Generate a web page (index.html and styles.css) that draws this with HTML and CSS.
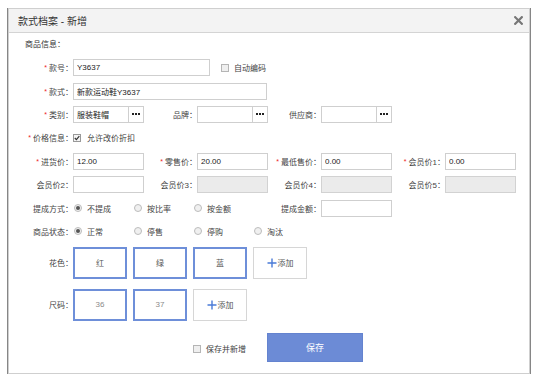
FILE: index.html
```html
<!DOCTYPE html>
<html lang="zh-CN">
<head>
    <meta charset="UTF-8">
    <meta name="viewport" content="width=device-width, initial-scale=1.0">
    <title>款式档案 - 新增</title>
    <link rel="stylesheet" href="styles.css">
</head>
<body>
<div class="dialog">
    <div class="dialog-head">
        <span class="dialog-title">款式档案 - 新增</span>
        <svg class="close" width="9" height="9" viewBox="0 0 9 9">
            <path d="M1.2 1.2 L7.8 7.8 M7.8 1.2 L1.2 7.8" stroke="#777" stroke-width="2.2" stroke-linecap="square"/>
        </svg>
    </div>

    <div class="dialog-body">
        <div class="section-title">商品信息：</div>

        <div class="row">
            <label class="lbl"><i>*</i>款号：</label>
            <input class="inp w-code" type="text" value="Y3637">
            <span class="check gap-l"><span class="box"></span>自动编码</span>
        </div>

        <div class="row">
            <label class="lbl"><i>*</i>款式：</label>
            <input class="inp w-name" type="text" value="新款运动鞋Y3637">
        </div>

        <div class="row">
            <label class="lbl"><i>*</i>类别：</label>
            <div class="lookup"><input type="text" value="服装鞋帽"><span class="dots"><b></b><b></b><b></b></span></div>
            <label class="lbl">品牌：</label>
            <div class="lookup"><input type="text" value=""><span class="dots"><b></b><b></b><b></b></span></div>
            <label class="lbl">供应商：</label>
            <div class="lookup"><input type="text" value=""><span class="dots"><b></b><b></b><b></b></span></div>
        </div>

        <div class="row">
            <label class="lbl"><i>*</i>价格信息：</label>
            <span class="check checked">
                <span class="box"><svg width="6" height="6" viewBox="0 0 6 6"><path d="M0.8 3 L2.4 4.6 L5.3 1.2" fill="none" stroke="#333" stroke-width="1.2"/></svg></span>允许改价折扣
            </span>
        </div>

        <div class="row">
            <label class="lbl"><i>*</i>进货价：</label>
            <input class="inp" type="text" value="12.00">
            <label class="lbl"><i>*</i>零售价：</label>
            <input class="inp" type="text" value="20.00">
            <label class="lbl"><i>*</i>最低售价：</label>
            <input class="inp" type="text" value="0.00">
            <label class="lbl"><i>*</i>会员价1：</label>
            <input class="inp" type="text" value="0.00">
        </div>

        <div class="row">
            <label class="lbl">会员价2：</label>
            <input class="inp" type="text" value="">
            <label class="lbl">会员价3：</label>
            <input class="inp" type="text" value="" disabled>
            <label class="lbl">会员价4：</label>
            <input class="inp" type="text" value="" disabled>
            <label class="lbl">会员价5：</label>
            <input class="inp" type="text" value="" disabled>
        </div>

        <div class="row">
            <label class="lbl">提成方式：</label>
            <div class="radios short">
                <span class="radio on"><span class="dot"></span>不提成</span>
                <span class="radio"><span class="dot"></span>按比率</span>
                <span class="radio"><span class="dot"></span>按金额</span>
            </div>
            <label class="lbl">提成金额：</label>
            <input class="inp" type="text" value="">
        </div>

        <div class="row">
            <label class="lbl">商品状态：</label>
            <div class="radios">
                <span class="radio on"><span class="dot"></span>正常</span>
                <span class="radio"><span class="dot"></span>停售</span>
                <span class="radio"><span class="dot"></span>停购</span>
                <span class="radio"><span class="dot"></span>淘汰</span>
            </div>
        </div>

        <div class="tiles-row first">
            <label class="lbl">花色：</label>
            <div class="tiles">
                <span class="tile">红</span>
                <span class="tile">绿</span>
                <span class="tile">蓝</span>
                <span class="tile add"><svg width="10" height="10" viewBox="0 0 10 10"><path d="M5 0.5 V9.5 M0.5 5 H9.5" stroke="#4a7bd8" stroke-width="1.4"/></svg>添加</span>
            </div>
        </div>

        <div class="tiles-row">
            <label class="lbl">尺码：</label>
            <div class="tiles">
                <span class="tile size">36</span>
                <span class="tile size">37</span>
                <span class="tile add"><svg width="10" height="10" viewBox="0 0 10 10"><path d="M5 0.5 V9.5 M0.5 5 H9.5" stroke="#4a7bd8" stroke-width="1.4"/></svg>添加</span>
            </div>
        </div>

        <div class="footer">
            <span class="check"><span class="box"></span>保存并新增</span>
            <button class="btn-save" type="button">保存</button>
        </div>
    </div>
</div>
</body>
</html>
```

FILE: styles.css
```css
* {
    box-sizing: border-box;
}

body {
    margin: 0;
    background: #fff;
    font-family: "Liberation Sans", "Noto Sans CJK SC", sans-serif;
    font-size: 8px;
    color: #333;
}

.dialog {
    margin: 8px 0 0 8px;
    width: 522px;
    height: 366px;
    border: 1px solid #cfcfcf;
    box-shadow: 0 1px 0 1px #868686;
    background: #fff;
}

.dialog-head {
    height: 24px;
    display: flex;
    align-items: center;
    justify-content: space-between;
    padding: 0 6px 0 9px;
    background: #f3f3f3;
    border-bottom: 1px solid #d4d4d4;
}
.dialog-title {
    font-size: 10px;
    color: #333;
}

.dialog-body {
    padding: 0 0 0 11px;
}

.section-title {
    height: 18px;
    line-height: 12px;
    padding: 6px 0 0 5px;
    color: #333;
    margin-bottom: 5px;
}

.row {
    height: 23.4px;
    display: flex;
    align-items: center;
}

.lbl {
    flex: none;
    width: 53px;
    text-align: right;
    white-space: nowrap;
    color: #444;
}
.lbl i {
    font-style: normal;
    color: #e22;
    font-size: 7px;
    margin-right: 2px;
    vertical-align: 1px;
}

.inp {
    flex: none;
    width: 71px;
    height: 17px;
    margin: 0;
    padding: 0 3px;
    border: 1px solid #cfcfcf;
    background: #fff;
    font: inherit;
    color: #222;
    outline: none;
}
.inp:disabled {
    background: #ebebeb;
    border-color: #d2d2d2;
}
.w-code {
    width: 137px;
}
.w-name {
    width: 194px;
}

.lookup {
    flex: none;
    width: 71px;
    height: 17px;
    display: flex;
    border: 1px solid #cfcfcf;
}
.lookup input {
    flex: 1;
    min-width: 0;
    margin: 0;
    padding: 0 3px;
    border: none;
    border-right: 1px solid #cfcfcf;
    font: inherit;
    color: #222;
    outline: none;
}
.dots {
    width: 14px;
    display: flex;
    align-items: center;
    justify-content: center;
    gap: 1px;
}
.dots b {
    width: 2px;
    height: 2px;
    background: #222;
}

.check {
    display: inline-flex;
    align-items: center;
    color: #444;
}
.check .box {
    width: 8px;
    height: 8px;
    margin-right: 5px;
    border: 1px solid #b5b5b5;
    background: #efefef;
    display: flex;
    align-items: center;
    justify-content: center;
}
.check.checked .box {
    background: #f4f4f4;
    border-color: #999;
    margin-right: 6px;
}
.gap-l {
    margin-left: 11px;
}

.radios {
    flex: none;
    display: flex;
}
.radios.short {
    width: 195px;
}
.radio {
    width: 60px;
    display: flex;
    align-items: center;
    color: #444;
}
.radio .dot {
    width: 8px;
    height: 8px;
    margin: 0 5px 0 1px;
    border: 1px solid #bcbcbc;
    border-radius: 50%;
    background: #f0f0f0;
    display: flex;
    align-items: center;
    justify-content: center;
}
.radio.on .dot::after {
    content: '';
    width: 4px;
    height: 4px;
    border-radius: 50%;
    background: #555;
}

.tiles-row {
    display: flex;
    align-items: center;
    margin-top: 10px;
}
.tiles-row.first {
    margin-top: 3.5px;
}
.tiles {
    display: flex;
    gap: 6px;
}
.tile {
    width: 54px;
    height: 32px;
    display: flex;
    align-items: center;
    justify-content: center;
    border: 2px solid #6e8fd9;
    color: #555;
}
.tile.size {
    color: #8a8a8a;
}
.tile.add {
    border: 1px solid #d6d6d6;
    color: #555;
    gap: 1px;
}

.footer {
    display: flex;
    align-items: center;
    margin-top: 12px;
    padding-left: 173px;
}
.footer .check {
    margin-top: 3px;
}
.btn-save {
    margin-left: 21px;
    width: 96px;
    height: 29px;
    border: 1px solid #6483cf;
    background: #6c8bd6;
    color: #fff;
    font: inherit;
    font-size: 9px;
}
```
